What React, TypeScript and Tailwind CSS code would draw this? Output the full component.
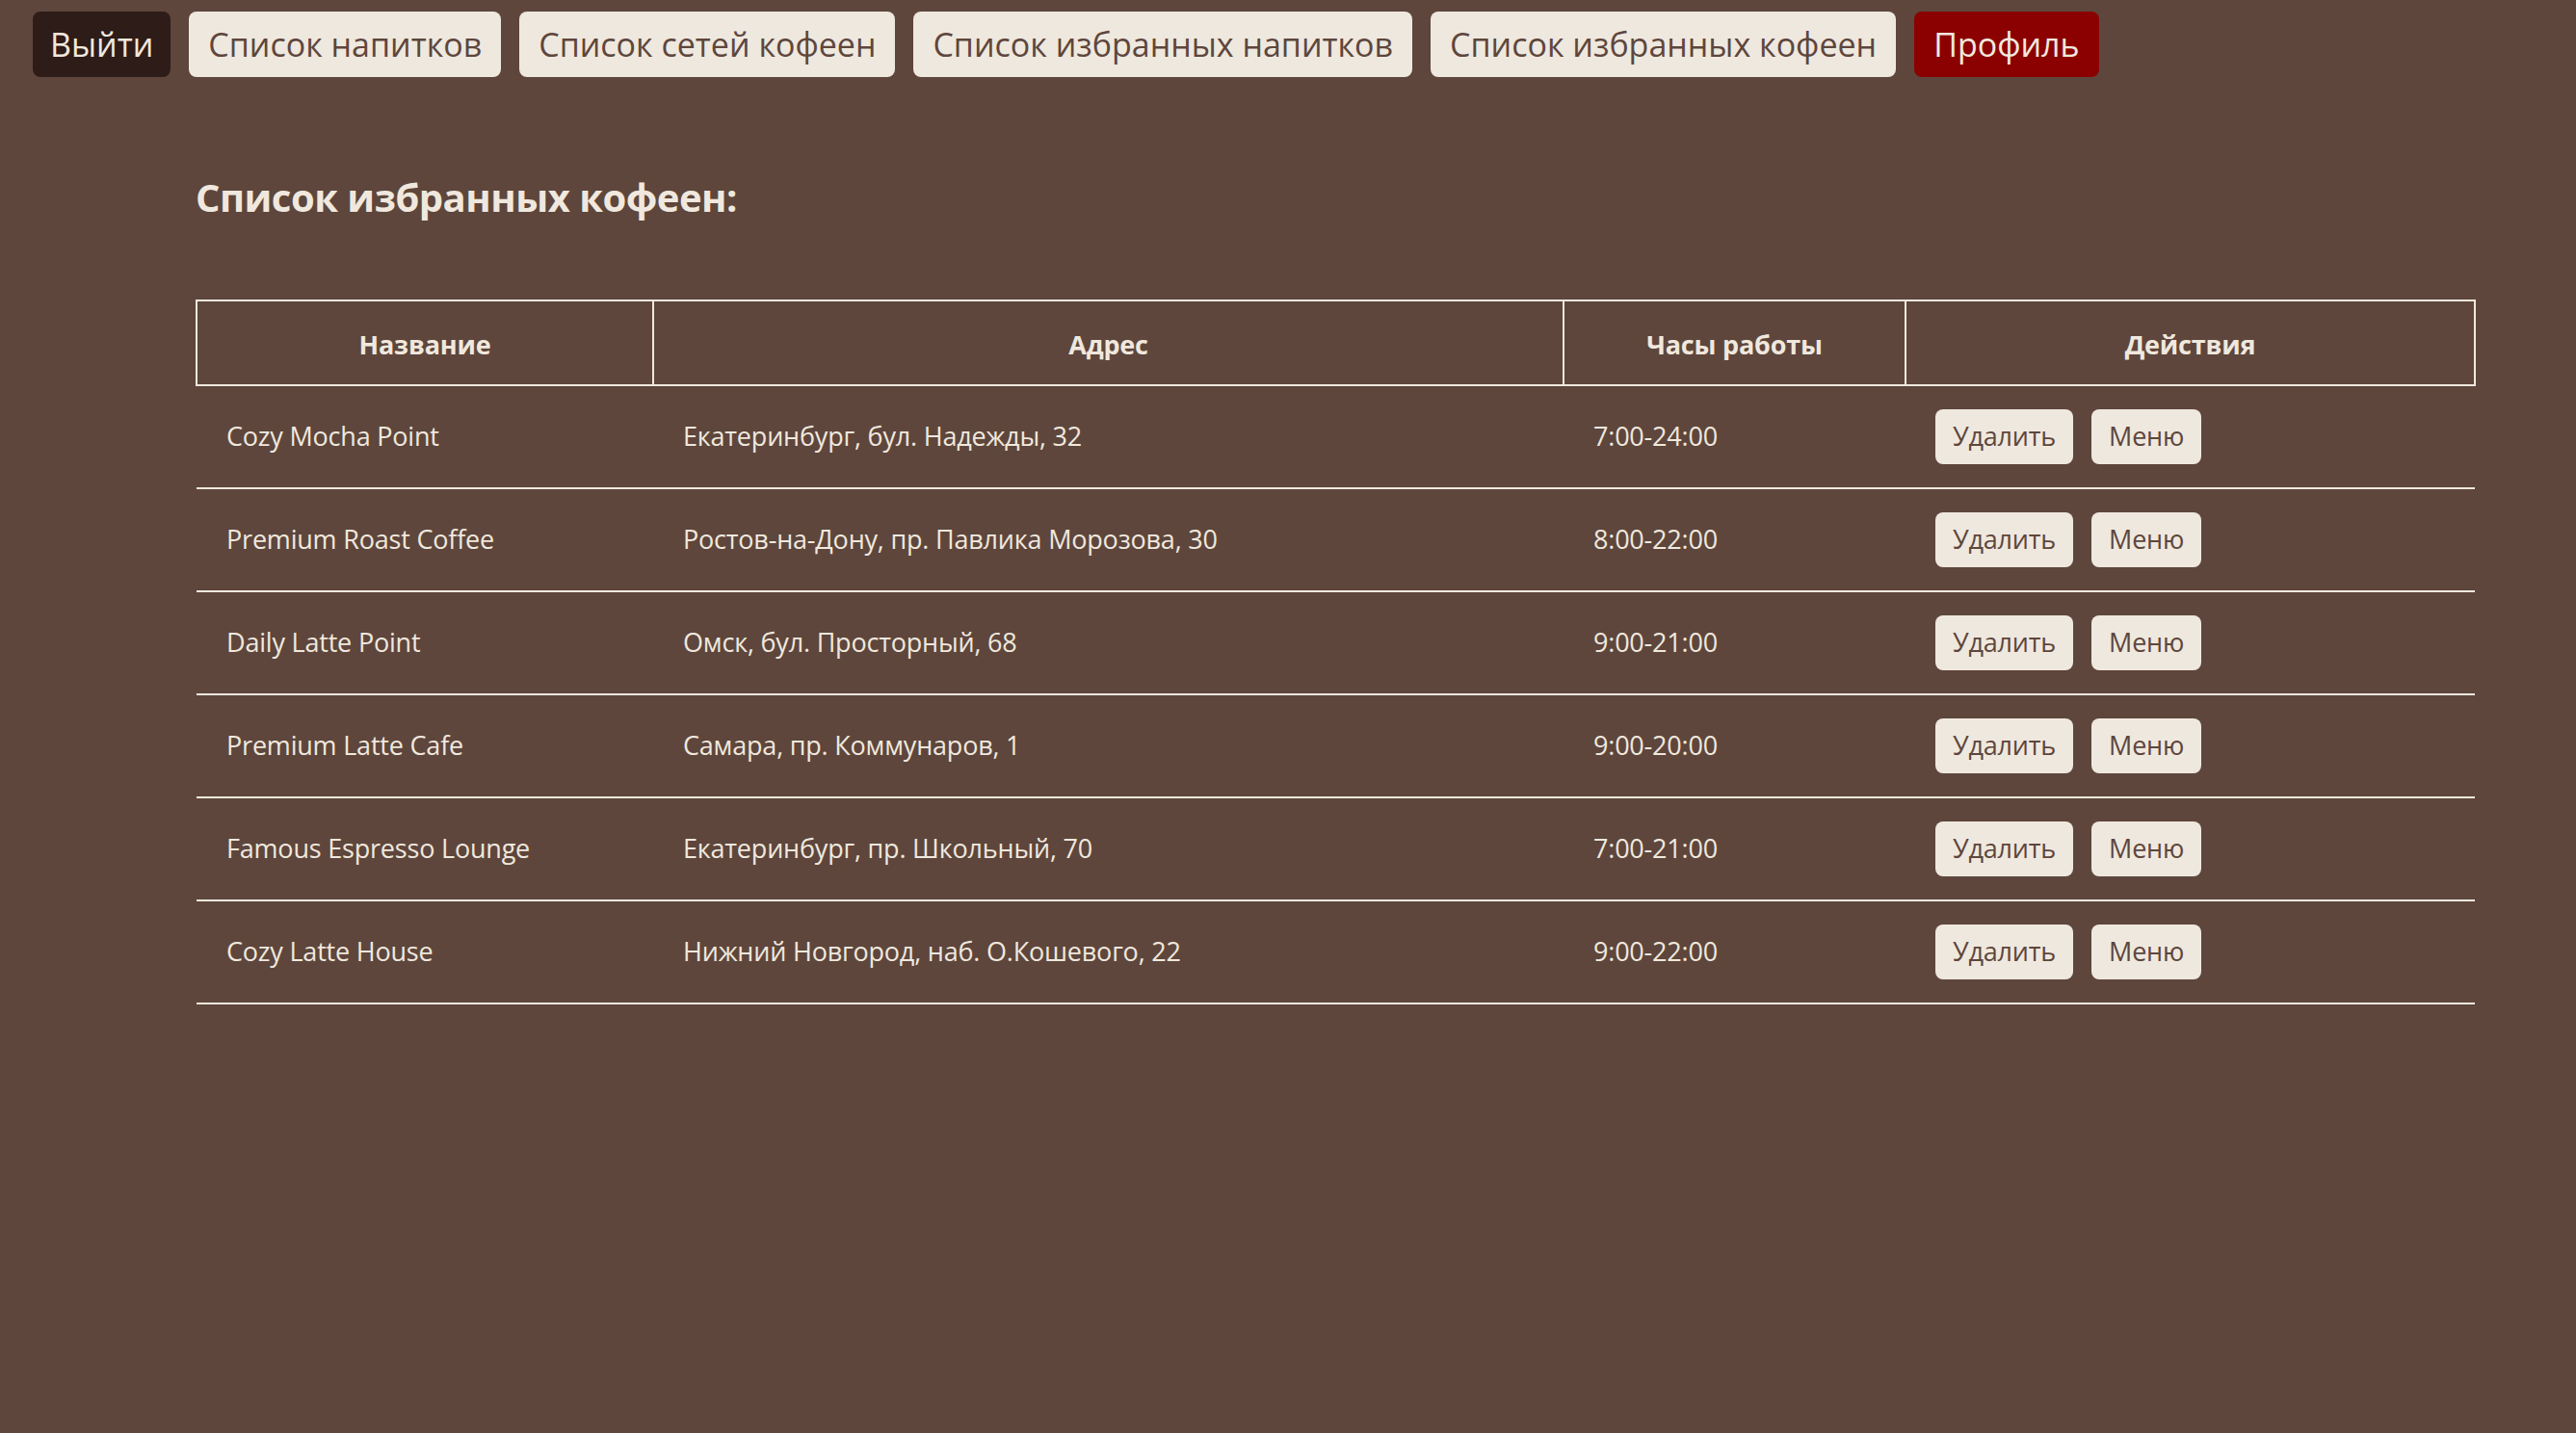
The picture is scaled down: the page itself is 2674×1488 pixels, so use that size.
import React from "react";

interface Cafe {
  name: string;
  address: string;
  hours: string;
}

const cafes: Cafe[] = [
  { name: "Cozy Mocha Point", address: "Екатеринбург, бул. Надежды, 32", hours: "7:00-24:00" },
  { name: "Premium Roast Coffee", address: "Ростов-на-Дону, пр. Павлика Морозова, 30", hours: "8:00-22:00" },
  { name: "Daily Latte Point", address: "Омск, бул. Просторный, 68", hours: "9:00-21:00" },
  { name: "Premium Latte Cafe", address: "Самара, пр. Коммунаров, 1", hours: "9:00-20:00" },
  { name: "Famous Espresso Lounge", address: "Екатеринбург, пр. Школьный, 70", hours: "7:00-21:00" },
  { name: "Cozy Latte House", address: "Нижний Новгород, наб. О.Кошевого, 22", hours: "9:00-22:00" },
];

const navLinks = [
  "Список напитков",
  "Список сетей кофеен",
  "Список избранных напитков",
  "Список избранных кофеен",
];

export default function App() {
  return (
    <div
      className="min-h-screen bg-[#5e463c] text-[#f0e8de]"
      style={{ fontFamily: '"Segoe UI", "Open Sans", "Noto Sans", sans-serif' }}
    >
      <nav className="flex gap-[19px] pl-[34px] pt-[12px]">
        <button className="h-[68px] rounded-[8px] bg-[#2e1c18] px-[18px] text-[34px] text-[#f0e8de]">
          Выйти
        </button>
        {navLinks.map((link) => (
          <button
            key={link}
            className="h-[68px] rounded-[8px] bg-[#efe8de] px-[20px] text-[34px] text-[#5e463c]"
          >
            {link}
          </button>
        ))}
        <button className="h-[68px] rounded-[8px] bg-[#8b0000] px-[20px] text-[34px] text-[#f0e8de]">
          Профиль
        </button>
      </nav>

      <main className="pl-[203px] pr-[104px]">
        <h2 className="mt-[105px] text-[40px] font-bold leading-none tracking-[-0.5px]">
          Список избранных кофеен:
        </h2>

        <table className="mt-[86px] w-full table-fixed border-collapse text-[27px] tracking-[-0.2px]">
          <colgroup>
            <col className="w-[474px]" />
            <col className="w-[945px]" />
            <col className="w-[355px]" />
            <col />
          </colgroup>
          <thead>
            <tr className="h-[88px]">
              {["Название", "Адрес", "Часы работы", "Действия"].map((h) => (
                <th key={h} className="border-2 border-[#f0e8de] pt-[4px] text-center font-bold">
                  {h}
                </th>
              ))}
            </tr>
          </thead>
          <tbody>
            {cafes.map((cafe) => (
              <tr key={cafe.name} className="h-[107px] border-b-2 border-[#f0e8de]">
                <td className="pl-[31px]">{cafe.name}</td>
                <td className="pl-[31px]">{cafe.address}</td>
                <td className="pl-[31px]">{cafe.hours}</td>
                <td className="pl-[31px]">
                  <div className="flex gap-[19px]">
                    <button className="h-[57px] rounded-[8px] bg-[#efe8de] px-[18px] text-[27px] text-[#5e463c]">
                      Удалить
                    </button>
                    <button className="h-[57px] rounded-[8px] bg-[#efe8de] px-[18px] text-[27px] text-[#5e463c]">
                      Меню
                    </button>
                  </div>
                </td>
              </tr>
            ))}
          </tbody>
        </table>
      </main>
    </div>
  );
}
